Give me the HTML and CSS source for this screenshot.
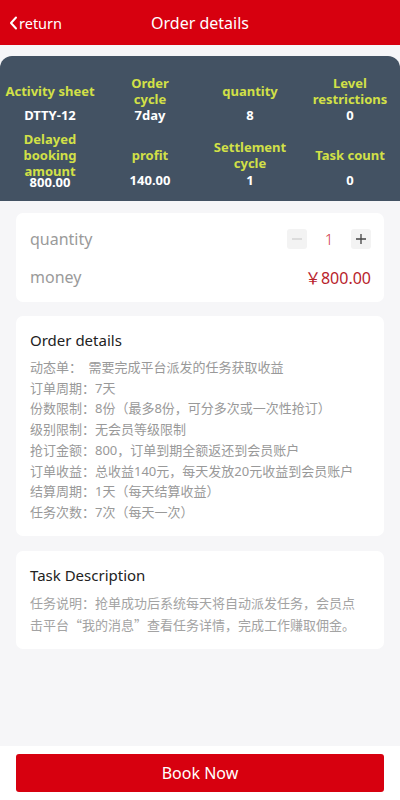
FILE: index.html
```html
<!DOCTYPE html>
<html lang="zh">
<head>
<meta charset="utf-8">
<title>Order details</title>
<link rel="stylesheet" href="styles.css">
</head>
<body>
<div class="page">
  <header class="topbar">
    <div class="back">
      <svg class="chev" width="9" height="14" viewBox="0 0 9 14"><path d="M7 1.5 L2 7 L7 12.5" fill="none" stroke="#fff" stroke-width="2" stroke-linecap="round" stroke-linejoin="round"/></svg>
      <span>return</span>
    </div>
    <div class="title">Order details</div>
  </header>

  <section class="panel">
    <div class="lbl r1 c1">Activity sheet</div>
    <div class="lbl r1 c2">Order<br>cycle</div>
    <div class="lbl r1 c3">quantity</div>
    <div class="lbl r1 c4">Level<br>restrictions</div>
    <div class="val r2 c1">DTTY-12</div>
    <div class="val r2 c2">7day</div>
    <div class="val r2 c3">8</div>
    <div class="val r2 c4">0</div>
    <div class="lbl r3 c1">Delayed<br>booking<br>amount</div>
    <div class="lbl r3 c2">profit</div>
    <div class="lbl r3 c3">Settlement<br>cycle</div>
    <div class="lbl r3 c4">Task count</div>
    <div class="val r4 c1 low">800.00</div>
    <div class="val r4 c2">140.00</div>
    <div class="val r4 c3">1</div>
    <div class="val r4 c4">0</div>
  </section>

  <section class="card buy">
    <div class="row">
      <span class="key">quantity</span>
      <div class="stepper">
        <span class="btn minus"><svg width="12" height="12" viewBox="0 0 12 12"><path d="M1 6 H11" stroke="#cfcfcf" stroke-width="1.3"/></svg></span>
        <span class="num">1</span>
        <span class="btn plus"><svg width="12" height="12" viewBox="0 0 12 12"><path d="M1 6 H11 M6 1 V11" stroke="#444" stroke-width="1.3"/></svg></span>
      </div>
    </div>
    <div class="row">
      <span class="key">money</span>
      <span class="money">￥800.00</span>
    </div>
  </section>

  <section class="card info">
    <h2>Order details</h2>
    <div class="lines">
      <p>动态单：　需要完成平台派发的任务获取收益</p>
      <p>订单周期：7天</p>
      <p>份数限制：8份（最多8份，可分多次或一次性抢订）</p>
      <p>级别限制：无会员等级限制</p>
      <p>抢订金额：800，订单到期全额返还到会员账户</p>
      <p>订单收益：总收益140元，每天发放20元收益到会员账户</p>
      <p>结算周期：1天（每天结算收益）</p>
      <p>任务次数：7次（每天一次）</p>
    </div>
  </section>

  <section class="card task">
    <h2>Task Description</h2>
    <p class="desc">任务说明：抢单成功后系统每天将自动派发任务，会员点击平台“我的消息”查看任务详情，完成工作赚取佣金。</p>
  </section>

  <footer class="bottom">
    <button class="book">Book Now</button>
  </footer>
</div>
</body>
</html>
```

FILE: styles.css
```css
* { box-sizing: border-box; }
html, body { margin: 0; padding: 0; }
body {
  background: #f6f6f8;
  font-family: "Noto Sans", "Noto Sans CJK SC", sans-serif;
  color: #333;
}
.page {
  min-height: 800px;
  display: flex;
  flex-direction: column;
}
.topbar {
  height: 45px;
  background: #d7000f;
  color: #fff;
  display: flex;
  align-items: center;
  justify-content: center;
  position: relative;
}
.back {
  position: absolute;
  left: 9px;
  top: 0;
  height: 45px;
  display: flex;
  align-items: center;
  gap: 1px;
  font-size: 14.5px;
}
.chev { display: block; }
.title {
  font-size: 16px;
}
.panel {
  margin-top: 11px;
  height: 145px;
  background: #435263;
  border-radius: 12px 12px 0 0;
  padding: 18px 0 0;
  display: grid;
  grid-template-columns: repeat(4, 1fr);
  grid-template-rows: 33px 15px 57px 14px;
  text-align: center;
  font-weight: 700;
  font-size: 13px;
  line-height: 16px;
}
.lbl { color: #d2e047; align-self: center; }
.val { color: #fff; align-self: center; }
.r1 { grid-row: 1; }
.r2 { grid-row: 2; }
.r3 { grid-row: 3; margin-top: 9px; }
.r4 { grid-row: 4; align-self: start; margin-top: -7px; }
.r4.low { margin-top: -5px; }
.c1 { grid-column: 1; }
.c2 { grid-column: 2; }
.c3 { grid-column: 3; }
.c4 { grid-column: 4; }

.card {
  background: #fff;
  margin: 0 16px;
  border-radius: 7px;
}
.buy {
  margin-top: 12px;
  padding: 7px 13px 6px 14px;
}
.row {
  height: 38px;
  display: flex;
  align-items: center;
  justify-content: space-between;
}
.key { font-size: 16px; color: #9a9a9a; }
.stepper { display: flex; align-items: center; }
.btn {
  width: 20px;
  height: 20px;
  background: #f3f3f3;
  border-radius: 3px;
  display: flex;
  align-items: center;
  justify-content: center;
}
.btn svg { display: block; }
.num {
  width: 44px;
  text-align: center;
  font-size: 15px;
  font-weight: 300;
  color: #d0343c;
}
.money { font-size: 16px; color: #b8232c; }

.info {
  margin-top: 14px;
  padding: 14px 14px 13px;
}
.card h2 {
  margin: 0;
  font-size: 15px;
  font-weight: 400;
  line-height: 20px;
  color: #222;
}
.lines { margin-top: 7px; }
.lines p {
  margin: 0;
  font-size: 13px;
  line-height: 20.7px;
  color: #999;
  white-space: nowrap;
}
.task {
  margin-top: 15px;
  padding: 14px 20px 13px 14px;
}
.desc {
  margin: 7px 0 0;
  font-family: "Noto Sans CJK SC", sans-serif;
  font-size: 13px;
  line-height: 22px;
  color: #a3a3a3;
}
.bottom {
  margin-top: auto;
  background: #fff;
  height: 54px;
  padding: 8px 16px 0;
}
.book {
  width: 100%;
  height: 38px;
  border: none;
  border-radius: 3px;
  background: #d7000f;
  color: #fff;
  font-family: "Noto Sans", "Noto Sans CJK SC", sans-serif;
  font-size: 16px;
  padding: 0;
}
```
